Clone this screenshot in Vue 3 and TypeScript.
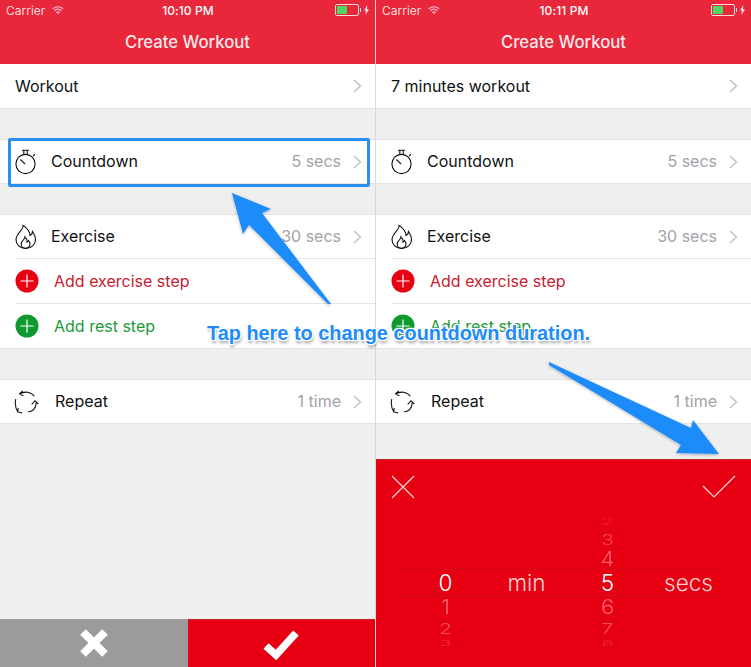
<script setup lang="ts">
interface Phone { time: string; title: string; picker: boolean }
const phones: Phone[] = [
  { time: '10:10 PM', title: 'Workout', picker: false },
  { time: '10:11 PM', title: '7 minutes workout', picker: true },
]
const wheel = [
  { n: '2', cls: 'w2' },
  { n: '3', cls: 'w3' },
  { n: '4', cls: 'w4' },
]
const below = [
  { s: '6', m: '1', cls: 'b1' },
  { s: '7', m: '2', cls: 'b2' },
  { s: '8', m: '3', cls: 'b3' },
]
</script>

<template>
  <div class="stage">
    <div v-for="(p, i) in phones" :key="i" class="phone">
      <header class="head">
        <div class="status">
          <span class="carrier">Carrier</span>
          <svg class="wifi" width="12" height="10" viewBox="0 0 14 10">
            <path d="M1 3.600C4.600.4 9.400.4 13 3.600M3 5.800c2.600-2.200 5.400-2.200 8 0M5 7.800c1.400-1 2.600-1 4 0" fill="none" stroke="#fbd" stroke-width="1.400"/>
            <circle cx="7" cy="9.200" r=".8" fill="#fbd"/>
          </svg>
          <span class="time">{{ p.time }}</span>
          <span class="batt"><span class="batt-fill"></span></span>
          <svg width="5" height="10" viewBox="0 0 5 10" class="bolt"><path d="M3.400 0 0 5.600h2L1.400 10 5 4.200H2.900z" fill="#fde"/></svg>
        </div>
        <h1 class="title">Create Workout</h1>
      </header>

      <section class="group first">
        <div class="row">
          <span class="label plain">{{ p.title }}</span>
          <svg class="chev" width="9" height="14" viewBox="0 0 9 14"><path d="M1 1l6.500 6L1 13" fill="none" stroke="#c4c4c8" stroke-width="1.500"/></svg>
        </div>
      </section>

      <section class="group">
        <div class="row">
          <svg class="ico" width="24" height="26" viewBox="0 0 24 26" fill="none" stroke="#111" stroke-width="1.100">
            <circle cx="11.500" cy="15" r="9.600"/>
            <path d="M8 1.200h7M9.800 1.200v4.200M13.200 1.200v4.200M19 7.200l2-2M6.500 10.500l4.600 4.600"/>
          </svg>
          <span class="label up">Countdown</span>
          <span class="value up">5 secs</span>
          <svg class="chev" width="9" height="14" viewBox="0 0 9 14"><path d="M1 1l6.500 6L1 13" fill="none" stroke="#c4c4c8" stroke-width="1.500"/></svg>
        </div>
      </section>

      <section class="group">
        <div class="row">
          <svg class="ico" width="24" height="26" viewBox="0 0 24 26" fill="none" stroke="#111" stroke-width="1.100">
            <path d="M9 1.500c1 4-6.500 7-7 14 0 5 4 9 9.500 9 6 0 10-4 10-9 0-4-2-6.500-3-8-.2 2-1 3.500-2.500 4C16 8 13 3.500 9 1.500z"/>
            <path d="M11 13c.5 2-3.800 3.500-3.800 7 0 2.500 2 4.300 4.300 4.300s4.500-1.800 4.500-4.300c0-1.800-1-3-1.700-3.500-.2 1-.8 1.500-1.300 1.700.2-2-.5-4-2-5.200z"/>
          </svg>
          <span class="label up">Exercise</span>
          <span class="value up">30 secs</span>
          <svg class="chev" width="9" height="14" viewBox="0 0 9 14"><path d="M1 1l6.500 6L1 13" fill="none" stroke="#c4c4c8" stroke-width="1.500"/></svg>
        </div>
        <div class="row inset">
          <svg class="ico" width="24" height="24" viewBox="0 0 24 24"><circle cx="12" cy="12" r="11.500" fill="#e60012"/><path d="M12 5.500v13M5.500 12h13" stroke="#fff" stroke-width="1.200"/></svg>
          <span class="label add red">Add exercise step</span>
        </div>
        <div class="row inset">
          <svg class="ico" width="24" height="24" viewBox="0 0 24 24"><circle cx="12" cy="12" r="11.500" fill="#0e9a2f"/><path d="M12 5.500v13M5.500 12h13" stroke="#fff" stroke-width="1.200"/></svg>
          <span class="label add green">Add rest step</span>
        </div>
      </section>

      <section class="group">
        <div class="row">
          <svg class="ico" width="26" height="26" viewBox="0 0 26 26" fill="none" stroke="#111" stroke-width="1.100">
            <path d="M20.300 7.300C17 2.500 10.500 2 5.300 5M5.300 5l3.500-3.200M5.300 5l4 1.800"/>
            <path d="M14.300 23c4-.5 7.500-3.500 8-9.500M21 11.700l-3.300 3.800M21 11.700l3.300 3.500"/>
            <path d="M1.800 10c-1 4.500-.5 9 2 13M3.800 23l.3-4M3.800 23l4.500 1"/>
          </svg>
          <span class="label rep up">Repeat</span>
          <span class="value up">1 time</span>
          <svg class="chev" width="9" height="14" viewBox="0 0 9 14"><path d="M1 1l6.500 6L1 13" fill="none" stroke="#c4c4c8" stroke-width="1.500"/></svg>
        </div>
      </section>

      <div class="spacer"></div>

      <footer v-if="!p.picker" class="actions">
        <button class="act cancel">
          <svg width="32" height="32" viewBox="0 0 32 32"><path d="M5 5l22 22M27 5L5 27" stroke="#fff" stroke-width="8"/></svg>
        </button>
        <button class="act ok">
          <svg width="38" height="32" viewBox="0 0 38 32"><path d="M4 18l10 9L34 5" fill="none" stroke="#fff" stroke-width="7.500"/></svg>
        </button>
      </footer>

      <div v-else class="picker">
        <div class="tools">
          <svg width="24" height="24" viewBox="0 0 24 24"><path d="M1 1l22 22M23 1L1 23" stroke="#fbd5d8" stroke-width="1.200"/></svg>
          <svg width="34" height="24" viewBox="0 0 34 24"><path d="M1 11l11 11L33 1" fill="none" stroke="#fbd5d8" stroke-width="1.200"/></svg>
        </div>
        <div class="wheel">
          <span v-for="w in wheel" :key="w.n" class="num sec" :class="w.cls">{{ w.n }}</span>
          <div class="sel">
            <span class="cur">0</span>
            <span class="unit">min</span>
            <span class="cur">5</span>
            <span class="unit">secs</span>
          </div>
          <template v-for="b in below" :key="b.s">
            <span class="num mn" :class="b.cls">{{ b.m }}</span>
            <span class="num sec" :class="b.cls">{{ b.s }}</span>
          </template>
        </div>
      </div>
    </div>

    <div class="highlight"></div>
    <svg class="arrows" width="751" height="667" viewBox="0 0 751 667">
      <defs>
        <filter id="sh" x="-20%" y="-20%" width="140%" height="140%">
          <feDropShadow dx="0" dy="1" stdDeviation="1.500" flood-color="#000" flood-opacity=".3"/>
        </filter>
      </defs>
      <polygon filter="url(#sh)" fill="#1e8cfa" points="232,193 271,209 262,213 331,304 328,304 249,225 243,234"/>
      <polygon filter="url(#sh)" fill="#1e8cfa" points="549,362 691,428 693,420 719,454 676,453 681,445 549,365"/>
    </svg>
    <div class="caption">Tap here to change countdown duration.</div>
  </div>
</template>

<style>
html, body { margin: 0; background: #fff; }
</style>

<style scoped>
.stage {
  position: relative;
  width: 751px;
  height: 667px;
  display: flex;
  gap: 1px;
  background: #d9d9dc;
  overflow: hidden;
  font-family: Inter, "Liberation Sans", sans-serif;
}
.phone {
  width: 375px;
  height: 667px;
  display: flex;
  flex-direction: column;
  background: #efeff0;
}
.head {
  height: 64px;
  flex: none;
  background: #e8273a;
  color: #fff;
}
.status {
  height: 20px;
  display: flex;
  align-items: center;
  padding: 0 6px;
  position: relative;
  font-size: 12px;
  color: #fbd9dc;
}
.carrier { margin-right: 7px; }
.time {
  position: absolute;
  left: 1px;
  right: 0;
  text-align: center;
  font-size: 12px;
  letter-spacing: .1px;
  color: #fff;
  font-weight: 500;
}
.batt {
  position: relative;
  margin-left: auto;
  width: 20px;
  height: 8px;
  border: 1px solid #fbd9dc;
  border-radius: 2px;
  padding: 1px;
  margin-right: 5px;
  display: block;
}
.batt::after {
  content: "";
  position: absolute;
  right: -3px;
  top: 3px;
  width: 1px;
  height: 4px;
  background: #fbd9dc;
}
.batt-fill {
  display: block;
  width: 10px;
  height: 8px;
  background: #4cd964;
  border-radius: 1px;
}
.title {
  margin: 0;
  height: 44px;
  line-height: 44px;
  text-align: center;
  font-size: 16.700px;
  font-weight: 500;
  color: #fbe9ea;
}
.group {
  margin-top: 30px;
  background: #fff;
  border-top: 1px solid #e3e3e5;
  border-bottom: 1px solid #e3e3e5;
  flex: none;
}
.group.first { margin-top: 0; border-top: 0; }
.group.first .row { height: 44px; }
.row {
  height: 43px;
  display: flex;
  align-items: center;
  padding: 0 13px 0 14px;
  color: #111;
  font-size: 16px;
}
.inset { border-top: 1px solid #e6e6e8; margin-left: 15px; padding-left: 0; height: 44px; }
.ico { flex: none; }
.label { margin-left: 13px; }
.up { margin-bottom: 2px; }
.label.plain { margin-left: 1px; }
.label.add { margin-left: 15px; }
.label.rep { margin-left: 15px; }
.red { color: #c8202f; }
.green { color: #1e9a3a; }
.value { margin-left: auto; color: #a2a2a6; }
.chev { margin-left: 12px; flex: none; }
.label.plain + .chev { margin-left: auto; }
.spacer { flex: 1; }
.actions { height: 48px; display: flex; flex: none; }
.act {
  flex: 1;
  border: 0;
  padding: 0;
  display: flex;
  align-items: center;
  justify-content: center;
}
.cancel { background: #9b9b9b; }
.ok { background: #e60012; border-top: 1px solid #c9202c; }
.picker {
  height: 208px;
  flex: none;
  background: #e60012;
  border-top: 1px solid #c9202c;
  box-sizing: border-box;
  display: flex;
  flex-direction: column;
}
.tools {
  height: 54px;
  flex: none;
  padding: 15px 15px 0 15px;
  box-sizing: border-box;
  display: flex;
  justify-content: space-between;
  align-items: flex-start;
}
.wheel {
  display: grid;
  grid-template-columns: repeat(4, 81px);
  grid-template-rows: 16px 19px 20px 27px 22px 20px 10px;
  margin: 0 22px 0 29px;
  color: #fff;
}
.num {
  text-align: center;
  font-size: 22px;
  font-weight: 300;
  line-height: 1;
  align-self: center;
  color: #ff6672;
}
.sec { grid-column: 3; }
.mn { grid-column: 1; }
.w2 { grid-row: 1; transform: scaleY(.45); opacity: .35; font-size: 20px; }
.w3 { grid-row: 2; transform: scaleY(.7); opacity: .65; font-size: 21px; }
.w4 { grid-row: 3; transform: scaleY(.88); opacity: .95; }
.b1 { grid-row: 5; transform: scaleY(.9); }
.b2 { grid-row: 6; transform: scaleY(.72); opacity: .75; font-size: 21px; }
.b3 { grid-row: 7; transform: scaleY(.4); opacity: .4; font-size: 20px; }
.sel {
  grid-column: 1 / -1;
  grid-row: 4;
  position: relative;
  display: grid;
  grid-template-columns: subgrid;
  align-items: center;
  text-align: center;
  font-size: 22.500px;
}
.sel::before {
  content: "";
  position: absolute;
  top: 0;
  bottom: 0;
  left: -4px;
  right: 8px;
  border-top: 1px solid #d2101d;
  border-bottom: 1px solid #d2101d;
}
.cur { color: #fff; font-weight: 300; }
.unit { color: #fbd0d4; font-weight: 300; }
.highlight {
  position: absolute;
  left: 8px;
  top: 138px;
  width: 362px;
  height: 49px;
  border: 3px solid #2a8ff0;
  border-radius: 2px;
  box-sizing: border-box;
}
.arrows { position: absolute; left: 0; top: 0; pointer-events: none; }
.caption {
  position: absolute;
  left: 207px;
  top: 321px;
  font-family: "Liberation Sans", Arial, sans-serif;
  font-weight: 700;
  font-size: 19.900px;
  line-height: 24px;
  white-space: nowrap;
  color: #1e8cfa;
  text-shadow:
    1px 0 0 #fff, -1px 0 0 #fff, 0 1px 0 #fff, 0 -1px 0 #fff,
    1px 1px 0 #fff, -1px -1px 0 #fff, 1px -1px 0 #fff, -1px 1px 0 #fff,
    0 0 3px #fff, 0 0 3px #fff,
    1px 3px 3px rgba(0,0,0,.45);
}
</style>
